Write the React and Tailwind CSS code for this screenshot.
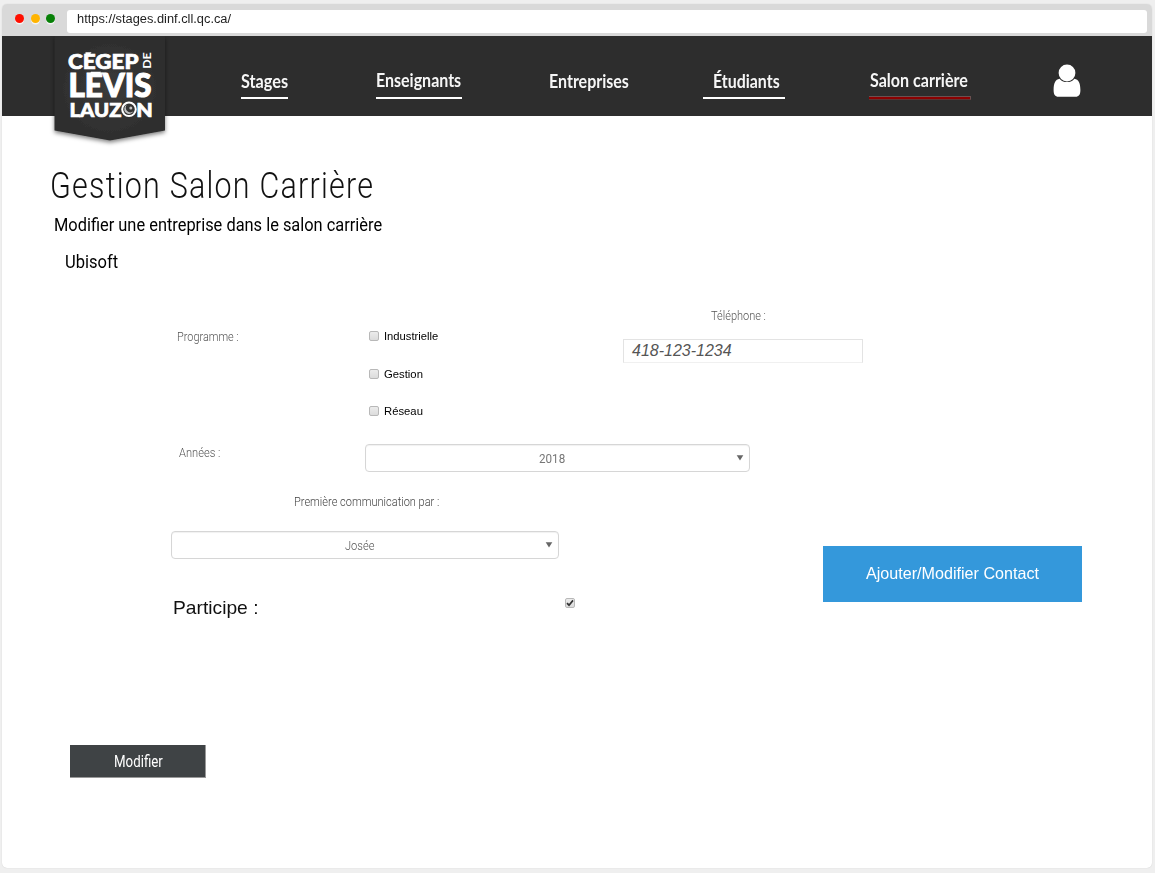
import { useLayoutEffect, useRef, useState } from "react";

// Single line of text, condensed or expanded to fill the width of its box.
function Fit({ className = "", children }) {
  const box = useRef(null);
  const text = useRef(null);
  const [scale, setScale] = useState(1);
  useLayoutEffect(() => {
    setScale(box.current.clientWidth / text.current.offsetWidth);
  }, []);
  return (
    <span ref={box} className={`block shrink-0 whitespace-nowrap ${className}`}>
      <span ref={text} className="inline-block origin-left align-top" style={{ transform: `scaleX(${scale})` }}>
        {children}
      </span>
    </span>
  );
}

function Logo() {
  return (
    <svg width="126" height="116" viewBox="46 36 126 116" className="block shrink-0" fontFamily="Lato, sans-serif" fontWeight="900" fill="#fff">
      <defs>
        <filter id="drop" x="-10%" y="-10%" width="120%" height="125%">
          <feDropShadow dx="0" dy="2" stdDeviation="2.2" floodColor="#000" floodOpacity="0.5" />
        </filter>
        <radialGradient id="glow">
          <stop offset="0" stopColor="#3b3b3b" />
          <stop offset="1" stopColor="#2d2d2d" />
        </radialGradient>
      </defs>
      <path d="M54.5 36H165V130.5L110 140.5L54.5 130.5Z" fill="url(#glow)" filter="url(#drop)" />
      <g stroke="#fff" strokeWidth="0.7">
        <text x="68" y="68.6" fontSize="20.5" textLength="70.5" lengthAdjust="spacingAndGlyphs">CEGEP</text>
        <text x="68.5" y="97" fontSize="32" strokeWidth="1.1" textLength="83" lengthAdjust="spacingAndGlyphs">LEVIS</text>
        <text x="69.5" y="116.5" fontSize="19.5" textLength="52" lengthAdjust="spacingAndGlyphs">LAUZ</text>
        <text x="136.2" y="116.5" fontSize="19.5" textLength="16.5" lengthAdjust="spacingAndGlyphs">N</text>
      </g>
      <path d="M85.5 52.2H91.5L90 54.6H85.5Z" />
      <path d="M91 71.8H101L99 75H89.5Z" />
      <text transform="translate(151 68.8) rotate(-90)" fontSize="12" fontWeight="700" textLength="16.5" lengthAdjust="spacingAndGlyphs">DE</text>
      <circle cx="129" cy="109.3" r="6.8" fill="none" stroke="#fff" strokeWidth="2" />
      <path d="M127 104.6A4.9 4.9 0 1 0 133.6 111A3.6 3.6 0 0 1 127 104.6Z" opacity="0.7" />
      <circle cx="130.8" cy="108" r="1.5" opacity="0.7" />
    </svg>
  );
}

function Check({ checked = false }) {
  return (
    <span className="flex h-[10px] w-[10px] shrink-0 items-center justify-center rounded-[2px] border border-[#b8b8b8] bg-linear-to-b from-[#ececec] to-[#dcdcdc]">
      {checked && (
        <svg viewBox="0 0 8 8" className="h-2 w-2" fill="none" stroke="#333" strokeWidth="1.7">
          <path d="M1 4.2L3 6.2L7 1.4" />
        </svg>
      )}
    </span>
  );
}

function Select({ className, children }) {
  return (
    <div className={`flex h-[28px] shrink-0 rounded-[4px] border border-[#d6d6d6] bg-white text-[13px] leading-4 text-[#777] shadow-[inset_0_1px_1px_rgba(0,0,0,0.06)] ${className}`}>
      {children}
      <svg width="8" height="6" viewBox="0 0 8 6" className="mt-[10px] mr-[5px] ml-auto" fill="#666">
        <path d="M0.7 0.2H7.3L4 5.6Z" />
      </svg>
    </div>
  );
}

const programmes = [
  { name: "Industrielle", width: "w-[54px]" },
  { name: "Gestion", width: "w-[39px]" },
  { name: "Réseau", width: "w-[39px]" },
];

export default function App() {
  return (
    <div className="h-[873px] w-[1155px] overflow-hidden bg-[#efefef] pt-1 pl-[2px] font-[Roboto,sans-serif]">
      <div className="flex h-[864px] w-[1150px] flex-col rounded-[5px] bg-white shadow-[0_0_1px_rgba(0,0,0,0.2)]">
        <div className="flex h-8 shrink-0 items-start rounded-t-[5px] bg-[#d9d9d9] pt-[6px]">
          <div className="mt-1 ml-[13px] flex gap-[6.5px]">
            <span className="h-[9px] w-[9px] rounded-full bg-[#ff0f00] shadow-[0_1.5px_0_#f3f3f3]" />
            <span className="h-[9px] w-[9px] rounded-full bg-[#ffb400] shadow-[0_1.5px_0_#f3f3f3]" />
            <span className="h-[9px] w-[9px] rounded-full bg-[#078007] shadow-[0_1.5px_0_#f3f3f3]" />
          </div>
          <div className="ml-[12px] h-[23px] w-[1080px] rounded-[3px] bg-white pl-[10px]">
            <Fit className="w-[154px] font-['Liberation_Sans',sans-serif] text-[12px] leading-[18px] text-[#222]">https://stages.dinf.cll.qc.ca/</Fit>
          </div>
        </div>

        <header className="flex h-20 shrink-0 bg-[#2d2d2d] pl-[44px] font-[Lato,sans-serif] text-[19px] leading-6 font-bold text-[#f6f6f6]">
          <Logo />
          <nav className="flex pt-[32px]">
            <div className="ml-[69px] h-[31px] w-[47px] border-b-2 border-white">
              <Fit className="mt-px w-[47px]">Stages</Fit>
            </div>
            <div className="ml-[88px] h-[31px] w-[86px] border-b-2 border-white">
              <Fit className="w-[85px]">Enseignants</Fit>
            </div>
            <div className="ml-[86px] h-[31px] w-[80px]">
              <Fit className="mt-px ml-[0.5px] w-[80px]">Entreprises</Fit>
            </div>
            <div className="ml-[75px] h-[31px] w-[82px] border-b-2 border-white pl-[10px]">
              <Fit className="mt-px w-[67px]">Étudiants</Fit>
            </div>
            <div className="ml-[84px] w-[102px]">
              <Fit className="ml-px w-[98px]">Salon carrière</Fit>
              <div className="mt-[4px] h-[4px] border-t border-r border-b border-t-[#6b5050] border-r-[#6b5050] border-b-[#5a3434] bg-[#8b0000]" />
            </div>
          </nav>
          <svg width="28" height="33" viewBox="0 0 28 33" className="mt-7 ml-[82px] shrink-0" fill="#fff">
            <circle cx="14" cy="9" r="8.4" />
            <path d="M6.5 14.8C9 17.5 11 18.1 14 18.1S19 17.5 21.5 14.8C25.5 15.5 27.4 19 27.4 26C27.4 30.5 26 32.8 22.5 32.8H5.5C2 32.8 0.6 30.5 0.6 26C0.6 19 2.5 15.5 6.5 14.8Z" />
          </svg>
        </header>

        <main className="flex grow flex-col pt-[48px]">
          <h1 className="pl-[48px] text-[37px] leading-[44px] font-light text-[#111]">
            <Fit className="w-[324px] tracking-[1.5px]">Gestion Salon Carrière</Fit>
          </h1>
          <h2 className="mt-[5px] pl-[52px] text-[19px] leading-6 text-black">
            <Fit className="w-[328px]">Modifier une entreprise dans le salon carrière</Fit>
          </h2>
          <h3 className="mt-[13px] pl-[63px] text-[19px] leading-6 text-black">
            <Fit className="w-[53px]">Ubisoft</Fit>
          </h3>

          <div className="mt-7 flex h-[142px] pl-[175px] text-[13px] leading-4 text-[#555]">
            <Fit className="mt-[27px] w-[62px] font-light">Programme :</Fit>
            <div className="mt-[26px] ml-[130px] flex h-[91px] w-[254px] flex-col justify-between">
              {programmes.map((p) => (
                <div key={p.name} className="flex h-4 items-center gap-[5px]">
                  <Check />
                  <Fit className={`font-['Liberation_Sans',sans-serif] text-[11px] text-black ${p.width}`}>{p.name}</Fit>
                </div>
              ))}
            </div>
            <div className="w-[240px]">
              <Fit className="mt-[6px] ml-[88px] w-[55px] font-light">Téléphone :</Fit>
              <div className="mt-[15px] h-[24px] border border-[#e3e3e3] border-b-[#f0f0f0] pl-[8px] font-['Liberation_Sans',sans-serif] text-[16px] leading-[22px] text-[#555] italic">
                <Fit className="w-[100px]">418-123-1234</Fit>
              </div>
            </div>
          </div>

          <div className="flex h-[50px] pl-[177px] text-[13px] leading-4 text-[#555]">
            <Fit className="mt-px w-[41px] font-light">Années :</Fit>
            <Select className="ml-[145px] w-[385px]">
              <Fit className="mt-[6px] ml-[173px] w-[26px]">2018</Fit>
            </Select>
          </div>

          <div className="flex pl-[169px]">
            <div className="w-[404px]">
              <Fit className="ml-[123px] w-[145px] text-[13px] leading-4 font-light text-[#444]">Première communication par :</Fit>
              <Select className="mt-[21px] w-[388px]">
                <Fit className="mt-[6px] ml-[173px] w-[29px] font-light text-[#555]">Josée</Fit>
              </Select>
              <div className="mt-[37px] flex justify-between pl-[2px]">
                <Fit className="w-[85px] font-['Liberation_Sans',sans-serif] text-[19px] leading-6 text-[#111]">Participe :</Fit>
                <div className="pt-[2px]"><Check checked /></div>
              </div>
            </div>
            <button className="mt-[52px] ml-[248px] flex h-[56px] w-[259px] justify-center bg-[#3498db] pt-[15px] font-['Liberation_Sans',sans-serif] text-[16.5px] leading-6 text-white">
              <Fit className="w-[173px]">Ajouter/Modifier Contact</Fit>
            </button>
          </div>

          <button className="mt-[125px] ml-[68px] flex h-[33px] w-[136px] justify-center border-r border-b border-[#999] bg-[#3f4345] pt-[5px] text-[16px] leading-6 text-white">
            <Fit className="ml-px w-[49px]">Modifier</Fit>
          </button>
        </main>
      </div>
    </div>
  );
}
